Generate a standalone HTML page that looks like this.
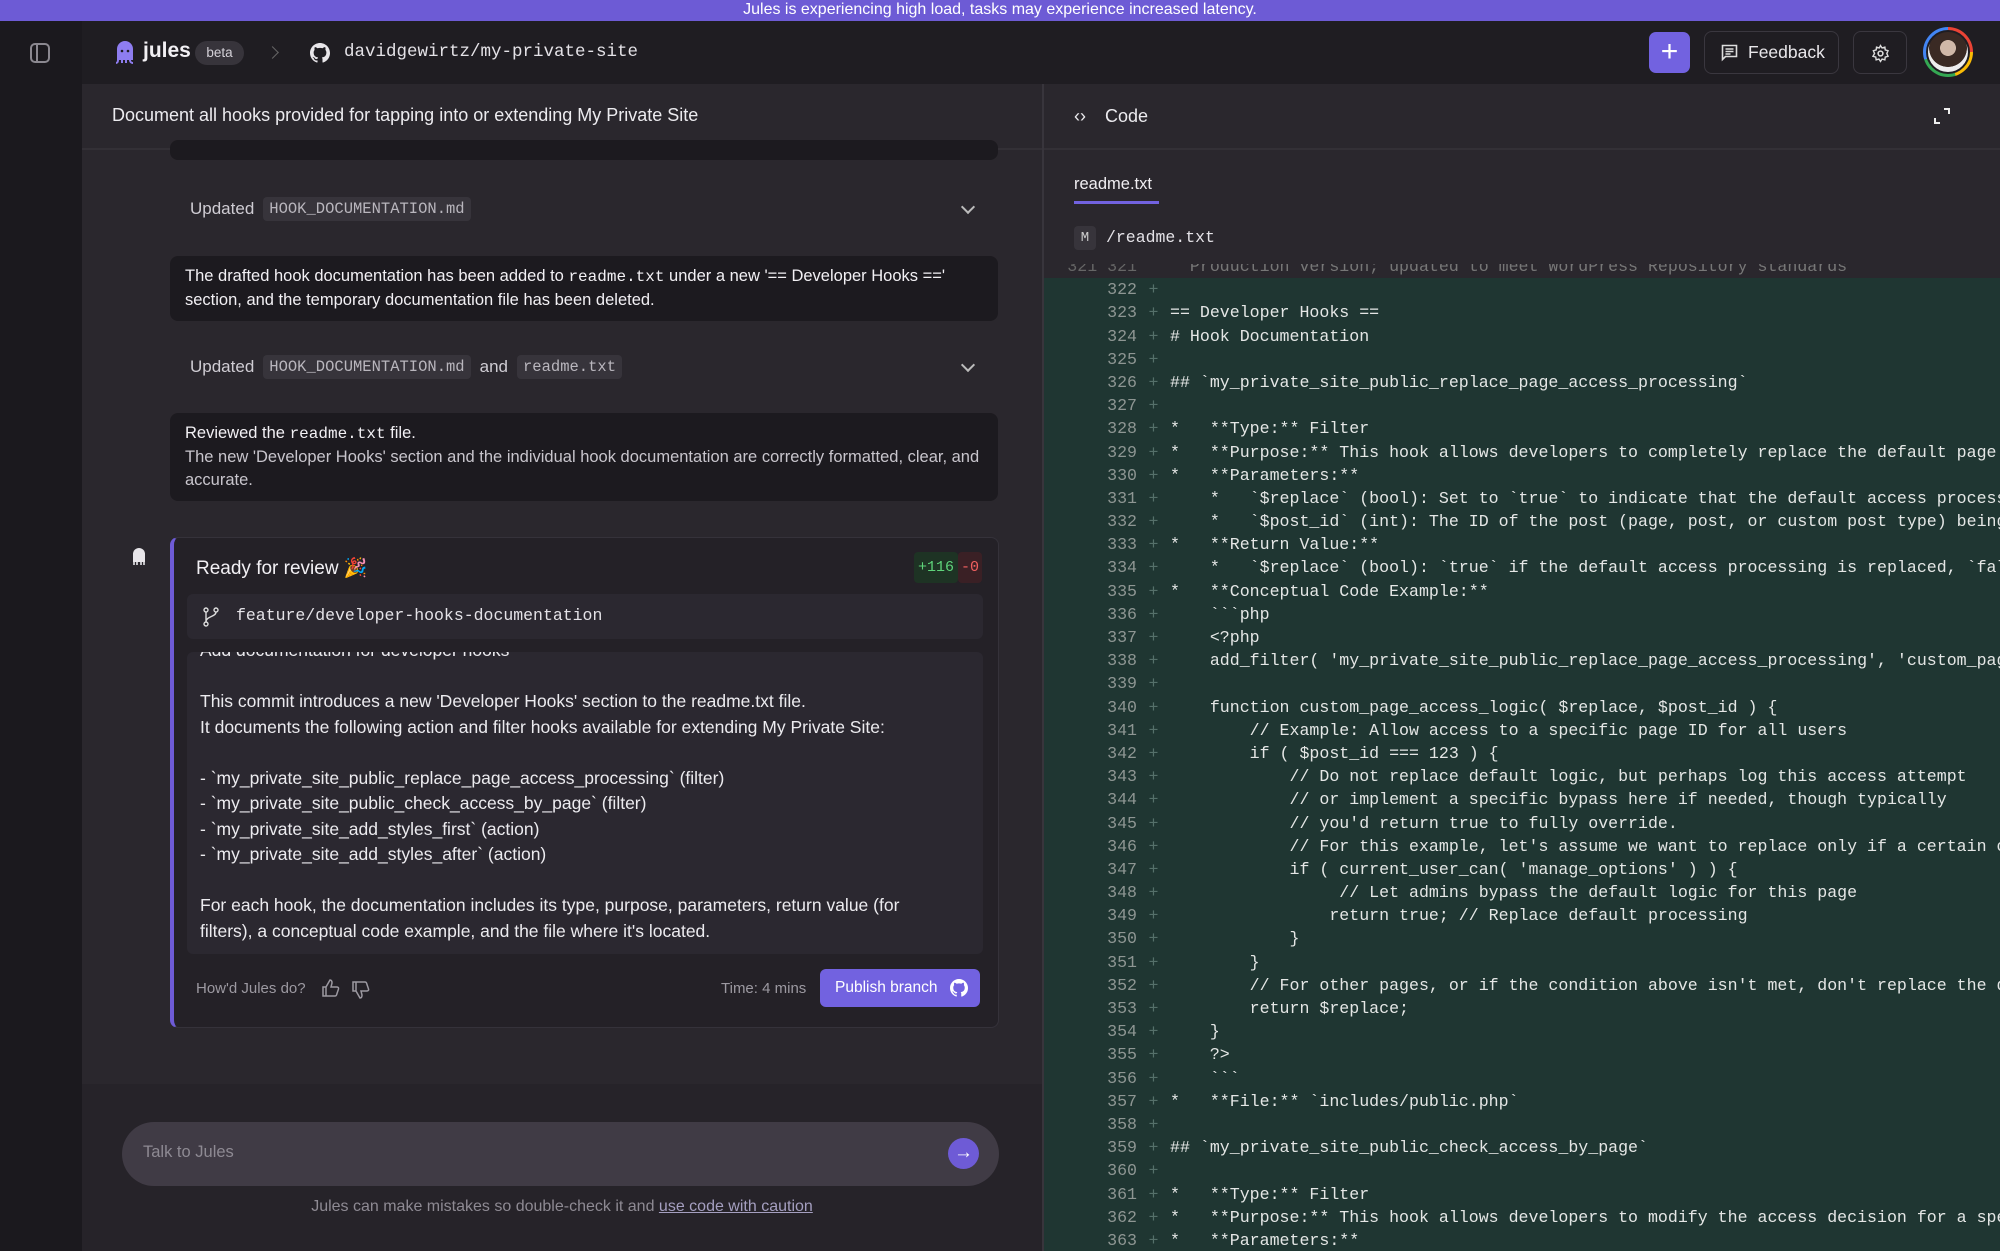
<!DOCTYPE html>
<html><head><meta charset="utf-8">
<style>
*{box-sizing:border-box;margin:0;padding:0}
body{width:2000px;height:1251px;overflow:hidden;background:#1e1c21;font-family:"Liberation Sans",sans-serif;color:#e8e6ea;position:relative}
.abs{position:absolute}
.mono{font-family:"Liberation Mono",monospace}
#banner{left:0;top:0;width:2000px;height:21px;background:#6d5bd5;color:#fff;font-size:16px;text-align:center;line-height:20px}
#side{left:0;top:21px;width:82px;height:1230px;background:#1b191e}
#hdr{left:82px;top:21px;width:1918px;height:63px;background:#1f1d22}
#left{left:82px;top:84px;width:960px;height:1167px;background:#2a272d;overflow:hidden}
#right{left:1042px;top:84px;width:958px;height:1167px;background:#2a272d;border-left:2px solid #38353c;overflow:hidden}
.card{position:absolute;left:88px;width:828px;background:#1c1a1f;border-radius:8px;font-size:16.5px;line-height:23px;padding:9px 15px;color:#f2f0f4}
.upd{position:absolute;left:108px;font-size:17px;color:#cfccd3;display:flex;align-items:center;gap:9px}
.chip{background:#37343b;border-radius:4px;padding:3px 6px;font-family:"Liberation Mono",monospace;font-size:15.5px;color:#b9b6bd}
.chev{position:absolute;left:881px;width:10px;height:10px;border-right:2px solid #bbb;border-bottom:2px solid #bbb;transform:rotate(45deg)}
pre{font-family:"Liberation Mono",monospace;font-size:16.6px;line-height:23.2px;white-space:pre;color:#e4e6e5}
.ln{display:block;height:23.2px;background:#1f3632;position:relative}
.ln .n{display:inline-block;width:93px;text-align:right;color:#8e9693}
.ln .p{display:inline-block;width:33px;text-align:center;color:#55706a}
.btn{position:absolute;border:1px solid #3a373f;border-radius:8px;background:#1f1d22}
</style></head><body>
<div id="banner" class="abs">Jules is experiencing high load, tasks may experience increased latency.</div>
<div id="side" class="abs">
 <div class="abs" style="left:30px;top:22px;width:20px;height:20px;border:2px solid #8b8890;border-radius:5px"></div>
 <div class="abs" style="left:36px;top:24px;width:2px;height:16px;background:#8b8890"></div>
</div>
<div id="hdr" class="abs">
 <svg class="abs" style="left:32px;top:19px" width="22" height="24" viewBox="0 0 22 24"><path d="M3 20V9a8 8 0 0 1 16 0v11" fill="#8e7df0"/><path d="M4 20c0 3-2 3-2 3M8 20v3M12 20v3M16 20c0 3 3 3 3 3" stroke="#8e7df0" stroke-width="2" fill="none"/><circle cx="8" cy="11" r="1.3" fill="#1f1d22"/><circle cx="14" cy="11" r="1.3" fill="#1f1d22"/></svg>
 <div class="abs" style="left:61px;top:18px;font-size:21px;font-weight:bold;color:#f2f0f4">jules</div>
 <div class="abs" style="left:113px;top:20px;width:49px;height:24px;border-radius:12px;background:#37343b;font-size:13.5px;color:#d4d1d8;text-align:center;line-height:24px">beta</div>
 <div class="abs" style="left:186px;top:27px;width:9px;height:9px;border-right:1.5px solid #666;border-top:1.5px solid #666;transform:rotate(45deg)"></div>
 <svg class="abs" style="left:228px;top:22px" width="20" height="20" viewBox="0 0 16 16"><path fill="#e8e6ea" d="M8 0C3.58 0 0 3.58 0 8c0 3.54 2.29 6.53 5.47 7.59.4.07.55-.17.55-.38v-1.33c-2.23.48-2.7-1.07-2.7-1.07-.36-.92-.89-1.17-.89-1.17-.73-.5.05-.49.05-.49.8.06 1.23.83 1.23.83.72 1.22 1.87.87 2.33.66.07-.52.28-.87.5-1.07-1.78-.2-3.64-.89-3.64-3.95 0-.87.31-1.59.82-2.15-.08-.2-.36-1.02.08-2.12 0 0 .67-.21 2.2.82a7.6 7.6 0 0 1 4 0c1.53-1.04 2.2-.82 2.2-.82.44 1.1.16 1.92.08 2.12.51.56.82 1.27.82 2.15 0 3.07-1.87 3.75-3.65 3.95.29.25.54.73.54 1.48v2.2c0 .21.15.46.55.38A8.01 8.01 0 0 0 16 8c0-4.42-3.58-8-8-8z"/></svg>
 <div class="abs mono" style="left:262px;top:21px;font-size:17.5px;color:#e4e2e7">davidgewirtz/my-private-site</div>
 <div class="abs" style="left:1567px;top:11px;width:41px;height:41px;border-radius:7px;background:#7262e0;color:#fff;font-size:30px;text-align:center;line-height:39px">+</div>
 <div class="btn" style="left:1622px;top:10px;width:135px;height:43px">
  <svg class="abs" style="left:16px;top:12px" width="17" height="18" viewBox="0 0 17 18"><path d="M1.5 1.5h14v11h-11l-3 3z" fill="none" stroke="#ddd" stroke-width="1.6"/><path d="M4.5 5h8M4.5 7.5h8M4.5 10h5" stroke="#ddd" stroke-width="1.4"/></svg>
  <div class="abs" style="left:43px;top:10px;font-size:17.5px;color:#e8e6ea">Feedback</div>
 </div>
 <div class="btn" style="left:1771px;top:10px;width:54px;height:43px">
  <svg class="abs" style="left:17px;top:12px" width="19" height="19" viewBox="0 0 24 24"><circle cx="12" cy="12" r="3" fill="none" stroke="#ddd" stroke-width="2"/><path d="M12 2l2 3 3.5-1 .5 3.5 3.5 1-1.5 3.5 1.5 3.5-3.5 1-.5 3.5-3.5-1-2 3-2-3-3.5 1-.5-3.5-3.5-1L4.5 12 3 8.5l3.5-1L7 4l3.5 1z" fill="none" stroke="#ddd" stroke-width="1.8"/></svg>
 </div>
 <div class="abs" style="left:1841px;top:6px;width:50px;height:50px;border-radius:50%;background:conic-gradient(#ea4335 0 25%,#fbbc05 0 45%,#34a853 0 70%,#4285f4 0 100%);padding:3px">
  <div style="width:44px;height:44px;border-radius:50%;background:radial-gradient(circle at 50% 40%,#d0b8a8 0 25%,#3a2a24 26% 60%,#eee 61%);border:2px solid #1f1d22"></div>
 </div>
</div>

<div id="left" class="abs">
 <div class="abs" style="left:0;top:0;width:960px;height:66px;border-bottom:2px solid #333036"></div>
 <div class="abs" style="left:30px;top:21px;font-size:18px;color:#ecebef">Document all hooks provided for tapping into or extending My Private Site</div>
 <div class="card" style="top:56px;height:20px;padding:0"></div>
 <div class="upd" style="top:113px">Updated <span class="chip">HOOK_DOCUMENTATION.md</span></div>
 <div class="chev" style="top:118px"></div>
 <div class="card" style="top:172px;height:65px">The drafted hook documentation has been added to <span class="mono" style="font-size:16px">readme.txt</span> under a new '== Developer Hooks ==' section, and the temporary documentation file has been deleted.</div>
 <div class="upd" style="top:271px">Updated <span class="chip">HOOK_DOCUMENTATION.md</span> and <span class="chip">readme.txt</span></div>
 <div class="chev" style="top:276px"></div>
 <div class="card" style="top:329px;height:88px">Reviewed the <span class="mono" style="font-size:16px">readme.txt</span> file.<br><span style="color:#c8c5cc">The new 'Developer Hooks' section and the individual hook documentation are correctly formatted, clear, and accurate.</span></div>

 <svg class="abs" style="left:49px;top:462px" width="16" height="20" viewBox="0 0 16 20"><path d="M2 16V8a6 6 0 0 1 12 0v8" fill="#e8e6ea"/><path d="M3 15v4M6 15v4M10 15v4M13 15v4" stroke="#e8e6ea" stroke-width="1.6"/></svg>
 <div class="abs" style="left:88px;top:453px;width:829px;height:491px;background:#242127;border:1px solid #35323a;border-left:4px solid #6e5bd6;border-radius:8px">
  <div class="abs" style="left:22px;top:18px;font-size:19px;color:#f2f0f4">Ready for review 🎉</div>
  <div class="abs mono" style="left:740px;top:14px;width:44px;height:31px;background:#1e3324;color:#5fd37a;font-size:15px;line-height:31px;text-align:center;border-radius:4px">+116</div>
  <div class="abs mono" style="left:784px;top:14px;width:24px;height:31px;background:#3a2025;color:#f06060;font-size:15px;line-height:31px;text-align:center;border-radius:4px">-0</div>
  <div class="abs" style="left:13px;top:56px;width:796px;height:45px;background:#2b2830;border-radius:6px">
   <svg class="abs" style="left:16px;top:13px" width="16" height="20" viewBox="0 0 16 20"><circle cx="3" cy="3" r="2" fill="none" stroke="#ddd" stroke-width="1.4"/><circle cx="3" cy="17" r="2" fill="none" stroke="#ddd" stroke-width="1.4"/><circle cx="13" cy="3" r="2" fill="none" stroke="#ddd" stroke-width="1.4"/><path d="M3 5v10M13 5c0 5-10 4-10 10" fill="none" stroke="#ddd" stroke-width="1.4"/></svg>
   <div class="abs mono" style="left:49px;top:12px;font-size:16.5px;color:#e4e2e7">feature/developer-hooks-documentation</div>
  </div>
  <div class="abs" style="left:13px;top:114px;width:796px;height:302px;background:#2b2830;border-radius:6px;overflow:hidden">
   <div class="abs" style="left:13px;top:-14px;font-size:17.5px;line-height:25.5px;color:#ecebef;white-space:pre">Add documentation for developer hooks

This commit introduces a new 'Developer Hooks' section to the readme.txt file.
It documents the following action and filter hooks available for extending My Private Site:

- &#96;my_private_site_public_replace_page_access_processing&#96; (filter)
- &#96;my_private_site_public_check_access_by_page&#96; (filter)
- &#96;my_private_site_add_styles_first&#96; (action)
- &#96;my_private_site_add_styles_after&#96; (action)

For each hook, the documentation includes its type, purpose, parameters, return value (for
filters), a conceptual code example, and the file where it's located.</div>
  </div>
  <div class="abs" style="left:22px;top:442px;font-size:15px;color:#9c99a1">How'd Jules do?</div>
  <svg class="abs" style="left:147px;top:440px" width="20" height="20" viewBox="0 0 20 20"><path d="M2 9h3v9H2zM5 9l4-7c2 0 2 2 2 3l-1 4h6c1 0 2 1 1.5 2l-2 6c-.3.7-1 1-1.5 1H5" fill="none" stroke="#9c99a1" stroke-width="1.5"/></svg>
  <svg class="abs" style="left:177px;top:442px" width="20" height="20" viewBox="0 0 20 20"><path d="M2 2h3v9H2zM5 11l4 7c2 0 2-2 2-3l-1-4h6c1 0 2-1 1.5-2l-2-6c-.3-.7-1-1-1.5-1H5" fill="none" stroke="#9c99a1" stroke-width="1.5"/></svg>
  <div class="abs" style="left:547px;top:442px;font-size:15px;color:#9c99a1">Time: 4 mins</div>
  <div class="abs" style="left:646px;top:431px;width:160px;height:38px;background:#7262e0;border-radius:6px;color:#fff;font-size:15.5px;line-height:38px;padding-left:15px">Publish branch
   <svg class="abs" style="left:130px;top:10px" width="18" height="18" viewBox="0 0 16 16"><path fill="#fff" d="M8 0C3.58 0 0 3.58 0 8c0 3.54 2.29 6.53 5.47 7.59.4.07.55-.17.55-.38v-1.33c-2.23.48-2.7-1.07-2.7-1.07-.36-.92-.89-1.17-.89-1.17-.73-.5.05-.49.05-.49.8.06 1.23.83 1.23.83.72 1.22 1.87.87 2.33.66.07-.52.28-.87.5-1.07-1.78-.2-3.64-.89-3.64-3.95 0-.87.31-1.59.82-2.15-.08-.2-.36-1.02.08-2.12 0 0 .67-.21 2.2.82a7.6 7.6 0 0 1 4 0c1.53-1.04 2.2-.82 2.2-.82.44 1.1.16 1.92.08 2.12.51.56.82 1.27.82 2.15 0 3.07-1.87 3.75-3.65 3.95.29.25.54.73.54 1.48v2.2c0 .21.15.46.55.38A8.01 8.01 0 0 0 16 8c0-4.42-3.58-8-8-8z"/></svg>
  </div>
 </div>

 <div class="abs" style="left:0;top:1000px;width:960px;height:167px;background:#262329"></div>
 <div class="abs" style="left:40px;top:1038px;width:877px;height:64px;border-radius:32px;background:#403b45">
  <div class="abs" style="left:21px;top:21px;font-size:16.5px;color:#8e8a93">Talk to Jules</div>
  <div class="abs" style="left:826px;top:16px;width:31px;height:31px;border-radius:50%;background:#6e5bd6;color:#fff;text-align:center;line-height:30px;font-size:19px">→</div>
 </div>
 <div class="abs" style="left:0;top:1114px;width:960px;text-align:center;font-size:16px;color:#8e8a93">Jules can make mistakes so double-check it and <span style="text-decoration:underline;color:#a59fc0">use code with caution</span></div>
</div>

<div id="right" class="abs">
 <div class="abs" style="left:-2px;top:0;width:960px;height:66px;border-bottom:2px solid #333036"></div>
 <div class="abs" style="left:30px;top:22px;font-size:18px;color:#ecebef">‹›</div>
 <div class="abs" style="left:61px;top:22px;font-size:18px;color:#ecebef">Code</div>
 <svg class="abs" style="left:888px;top:22px" width="20" height="20" viewBox="0 0 20 20"><path d="M12 3h5v5M3 12v5h5" fill="none" stroke="#eee" stroke-width="2"/></svg>
 <div class="abs" style="left:30px;top:91px;font-size:16.5px;color:#f0eef2">readme.txt</div>
 <div class="abs" style="left:30px;top:117px;width:85px;height:3px;background:#7262e0"></div>
 <div class="abs mono" style="left:30px;top:142px;width:22px;height:24px;background:#37343b;border-radius:4px;font-size:14px;text-align:center;line-height:24px;color:#ccc">M</div>
 <div class="abs mono" style="left:62px;top:144px;font-size:16.5px;color:#e4e2e7">/readme.txt</div>
 <div class="abs" style="left:0;top:180px;width:958px;height:990px;overflow:hidden">
<pre style="position:absolute;left:0;top:-9px"><span class="ln" style="background:none;color:#777"><span class="n" style="width:93px;color:#666">321 321</span><span class="p"> </span>  Production version; updated to meet WordPress Repository standards</span><span class="ln"><span class="n">322</span><span class="p">+</span></span><span class="ln"><span class="n">323</span><span class="p">+</span>== Developer Hooks ==</span><span class="ln"><span class="n">324</span><span class="p">+</span># Hook Documentation</span><span class="ln"><span class="n">325</span><span class="p">+</span></span><span class="ln"><span class="n">326</span><span class="p">+</span>## &#96;my_private_site_public_replace_page_access_processing&#96;</span><span class="ln"><span class="n">327</span><span class="p">+</span></span><span class="ln"><span class="n">328</span><span class="p">+</span>*   **Type:** Filter</span><span class="ln"><span class="n">329</span><span class="p">+</span>*   **Purpose:** This hook allows developers to completely replace the default page access processing</span><span class="ln"><span class="n">330</span><span class="p">+</span>*   **Parameters:**</span><span class="ln"><span class="n">331</span><span class="p">+</span>    *   &#96;$replace&#96; (bool): Set to &#96;true&#96; to indicate that the default access processing should be replaced</span><span class="ln"><span class="n">332</span><span class="p">+</span>    *   &#96;$post_id&#96; (int): The ID of the post (page, post, or custom post type) being accessed</span><span class="ln"><span class="n">333</span><span class="p">+</span>*   **Return Value:**</span><span class="ln"><span class="n">334</span><span class="p">+</span>    *   &#96;$replace&#96; (bool): &#96;true&#96; if the default access processing is replaced, &#96;false&#96; otherwise</span><span class="ln"><span class="n">335</span><span class="p">+</span>*   **Conceptual Code Example:**</span><span class="ln"><span class="n">336</span><span class="p">+</span>    &#96;&#96;&#96;php</span><span class="ln"><span class="n">337</span><span class="p">+</span>    &lt;?php</span><span class="ln"><span class="n">338</span><span class="p">+</span>    add_filter( 'my_private_site_public_replace_page_access_processing', 'custom_page_access_logic', 10, 2 );</span><span class="ln"><span class="n">339</span><span class="p">+</span></span><span class="ln"><span class="n">340</span><span class="p">+</span>    function custom_page_access_logic( $replace, $post_id ) {</span><span class="ln"><span class="n">341</span><span class="p">+</span>        // Example: Allow access to a specific page ID for all users</span><span class="ln"><span class="n">342</span><span class="p">+</span>        if ( $post_id === 123 ) {</span><span class="ln"><span class="n">343</span><span class="p">+</span>            // Do not replace default logic, but perhaps log this access attempt</span><span class="ln"><span class="n">344</span><span class="p">+</span>            // or implement a specific bypass here if needed, though typically</span><span class="ln"><span class="n">345</span><span class="p">+</span>            // you'd return true to fully override.</span><span class="ln"><span class="n">346</span><span class="p">+</span>            // For this example, let's assume we want to replace only if a certain condition</span><span class="ln"><span class="n">347</span><span class="p">+</span>            if ( current_user_can( 'manage_options' ) ) {</span><span class="ln"><span class="n">348</span><span class="p">+</span>                 // Let admins bypass the default logic for this page</span><span class="ln"><span class="n">349</span><span class="p">+</span>                return true; // Replace default processing</span><span class="ln"><span class="n">350</span><span class="p">+</span>            }</span><span class="ln"><span class="n">351</span><span class="p">+</span>        }</span><span class="ln"><span class="n">352</span><span class="p">+</span>        // For other pages, or if the condition above isn't met, don't replace the default</span><span class="ln"><span class="n">353</span><span class="p">+</span>        return $replace;</span><span class="ln"><span class="n">354</span><span class="p">+</span>    }</span><span class="ln"><span class="n">355</span><span class="p">+</span>    ?&gt;</span><span class="ln"><span class="n">356</span><span class="p">+</span>    &#96;&#96;&#96;</span><span class="ln"><span class="n">357</span><span class="p">+</span>*   **File:** &#96;includes/public.php&#96;</span><span class="ln"><span class="n">358</span><span class="p">+</span></span><span class="ln"><span class="n">359</span><span class="p">+</span>## &#96;my_private_site_public_check_access_by_page&#96;</span><span class="ln"><span class="n">360</span><span class="p">+</span></span><span class="ln"><span class="n">361</span><span class="p">+</span>*   **Type:** Filter</span><span class="ln"><span class="n">362</span><span class="p">+</span>*   **Purpose:** This hook allows developers to modify the access decision for a specific page</span><span class="ln"><span class="n">363</span><span class="p">+</span>*   **Parameters:**</span></pre>
 </div>
</div>
</body></html>
